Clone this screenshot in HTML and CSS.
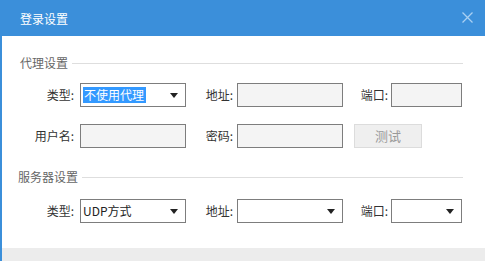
FILE: index.html
```html
<!DOCTYPE html>
<html>
<head lang="zh-CN">
    <meta charset="UTF-8">
    <title>登录设置</title>
    <link rel="stylesheet" href="styles.css">
</head>
<body>
<div class="dialog">
    <div class="head">
        <span class="title">登录设置</span>
        <svg class="close" width="11" height="11" viewBox="0 0 11 11">
            <path d="M0.5 0.5 L10.5 10.5 M10.5 0.5 L0.5 10.5" stroke="#a9d0f2" stroke-width="1.3" fill="none"/>
        </svg>
    </div>
    <div class="main">
        <div class="group">代理设置</div>
        <div class="row">
            <label>类型:</label>
            <div class="select"><span class="hl">不使用代理</span><i class="arrow"></i></div>
            <label>地址:</label>
            <div class="input"></div>
            <label>端口:</label>
            <div class="input"></div>
        </div>
        <div class="row row2">
            <label>用户名:</label>
            <div class="input"></div>
            <label>密码:</label>
            <div class="input"></div>
            <span></span>
            <div class="btn">测试</div>
        </div>
        <div class="group group2">服务器设置</div>
        <div class="row row3">
            <label>类型:</label>
            <div class="select"><span>UDP方式</span><i class="arrow"></i></div>
            <label>地址:</label>
            <div class="select"><span></span><i class="arrow"></i></div>
            <label>端口:</label>
            <div class="select"><span></span><i class="arrow"></i></div>
        </div>
    </div>
    <div class="foot">
        <span>如何设置</span>
        <span>确定</span>
        <span>取消</span>
    </div>
</div>
</body>
</html>
```

FILE: styles.css
```css
* {
    margin: 0;
    padding: 0;
    box-sizing: border-box;
}

body {
    background: #fff;
    font-family: "Noto Sans CJK SC", "Liberation Sans", sans-serif;
    font-size: 12px;
    color: #333;
}

.dialog {
    width: 485px;
    height: 261px;
    overflow: hidden;
    border-left: 2px solid #3b8fda;
}

.head {
    height: 36px;
    background: #3b8fda;
    display: flex;
    align-items: center;
    justify-content: space-between;
    padding: 0 12px 0 18px;
    color: #fff;
}

.head .title {
    font-size: 12px;
}

.head .close {
    display: block;
    margin-top: -1px;
}

.main {
    padding-top: 20px;
    height: 212px;
}

.group {
    display: flex;
    align-items: center;
    height: 14px;
    line-height: 14px;
    padding-left: 18px;
    margin-right: 22px;
    color: #666;
}

.group::after {
    content: "";
    flex: 1;
    height: 1px;
    background: #dedede;
    margin-left: 4px;
}

.group2 {
    margin-top: 22px;
    padding-left: 16px;
}

.row {
    display: grid;
    grid-template-columns: 78px 106px 51px 106px 48px 71px;
    height: 24px;
    margin-top: 13px;
}

.row2 {
    margin-top: 17px;
}

.row3 {
    margin-top: 15px;
}

.row label {
    text-align: right;
    line-height: 24px;
    padding-right: 6px;
    color: #333;
}

.row label:nth-of-type(2) {
    padding-right: 4px;
}

.row label:nth-of-type(3) {
    padding-right: 3px;
}

.input {
    border: 1px solid #7d7d7d;
    background: #f4f4f4;
}

.select {
    border: 1px solid #7d7d7d;
    background: #fff;
    display: flex;
    align-items: center;
    justify-content: space-between;
    padding: 0 7px 0 2px;
    line-height: 16px;
    color: #222;
}

.select .hl {
    background: #3399ff;
    color: #fff;
    padding: 0 2px 0 1px;
}

.arrow {
    width: 0;
    height: 0;
    border-top: 5px solid #222;
    border-left: 4px solid transparent;
    border-right: 4px solid transparent;
}

.btn {
    margin-left: -37px;
    width: 68px;
    border: 1px solid #dcdcdc;
    background: #efefef;
    color: #999;
    text-align: center;
    line-height: 22px;
    font-size: 13px;
}

.foot {
    height: 13px;
    background: #ececec;
    display: flex;
    justify-content: flex-end;
    gap: 30px;
    padding: 13px 26px 0 0;
    color: #5aa6e6;
    line-height: 14px;
}
```
